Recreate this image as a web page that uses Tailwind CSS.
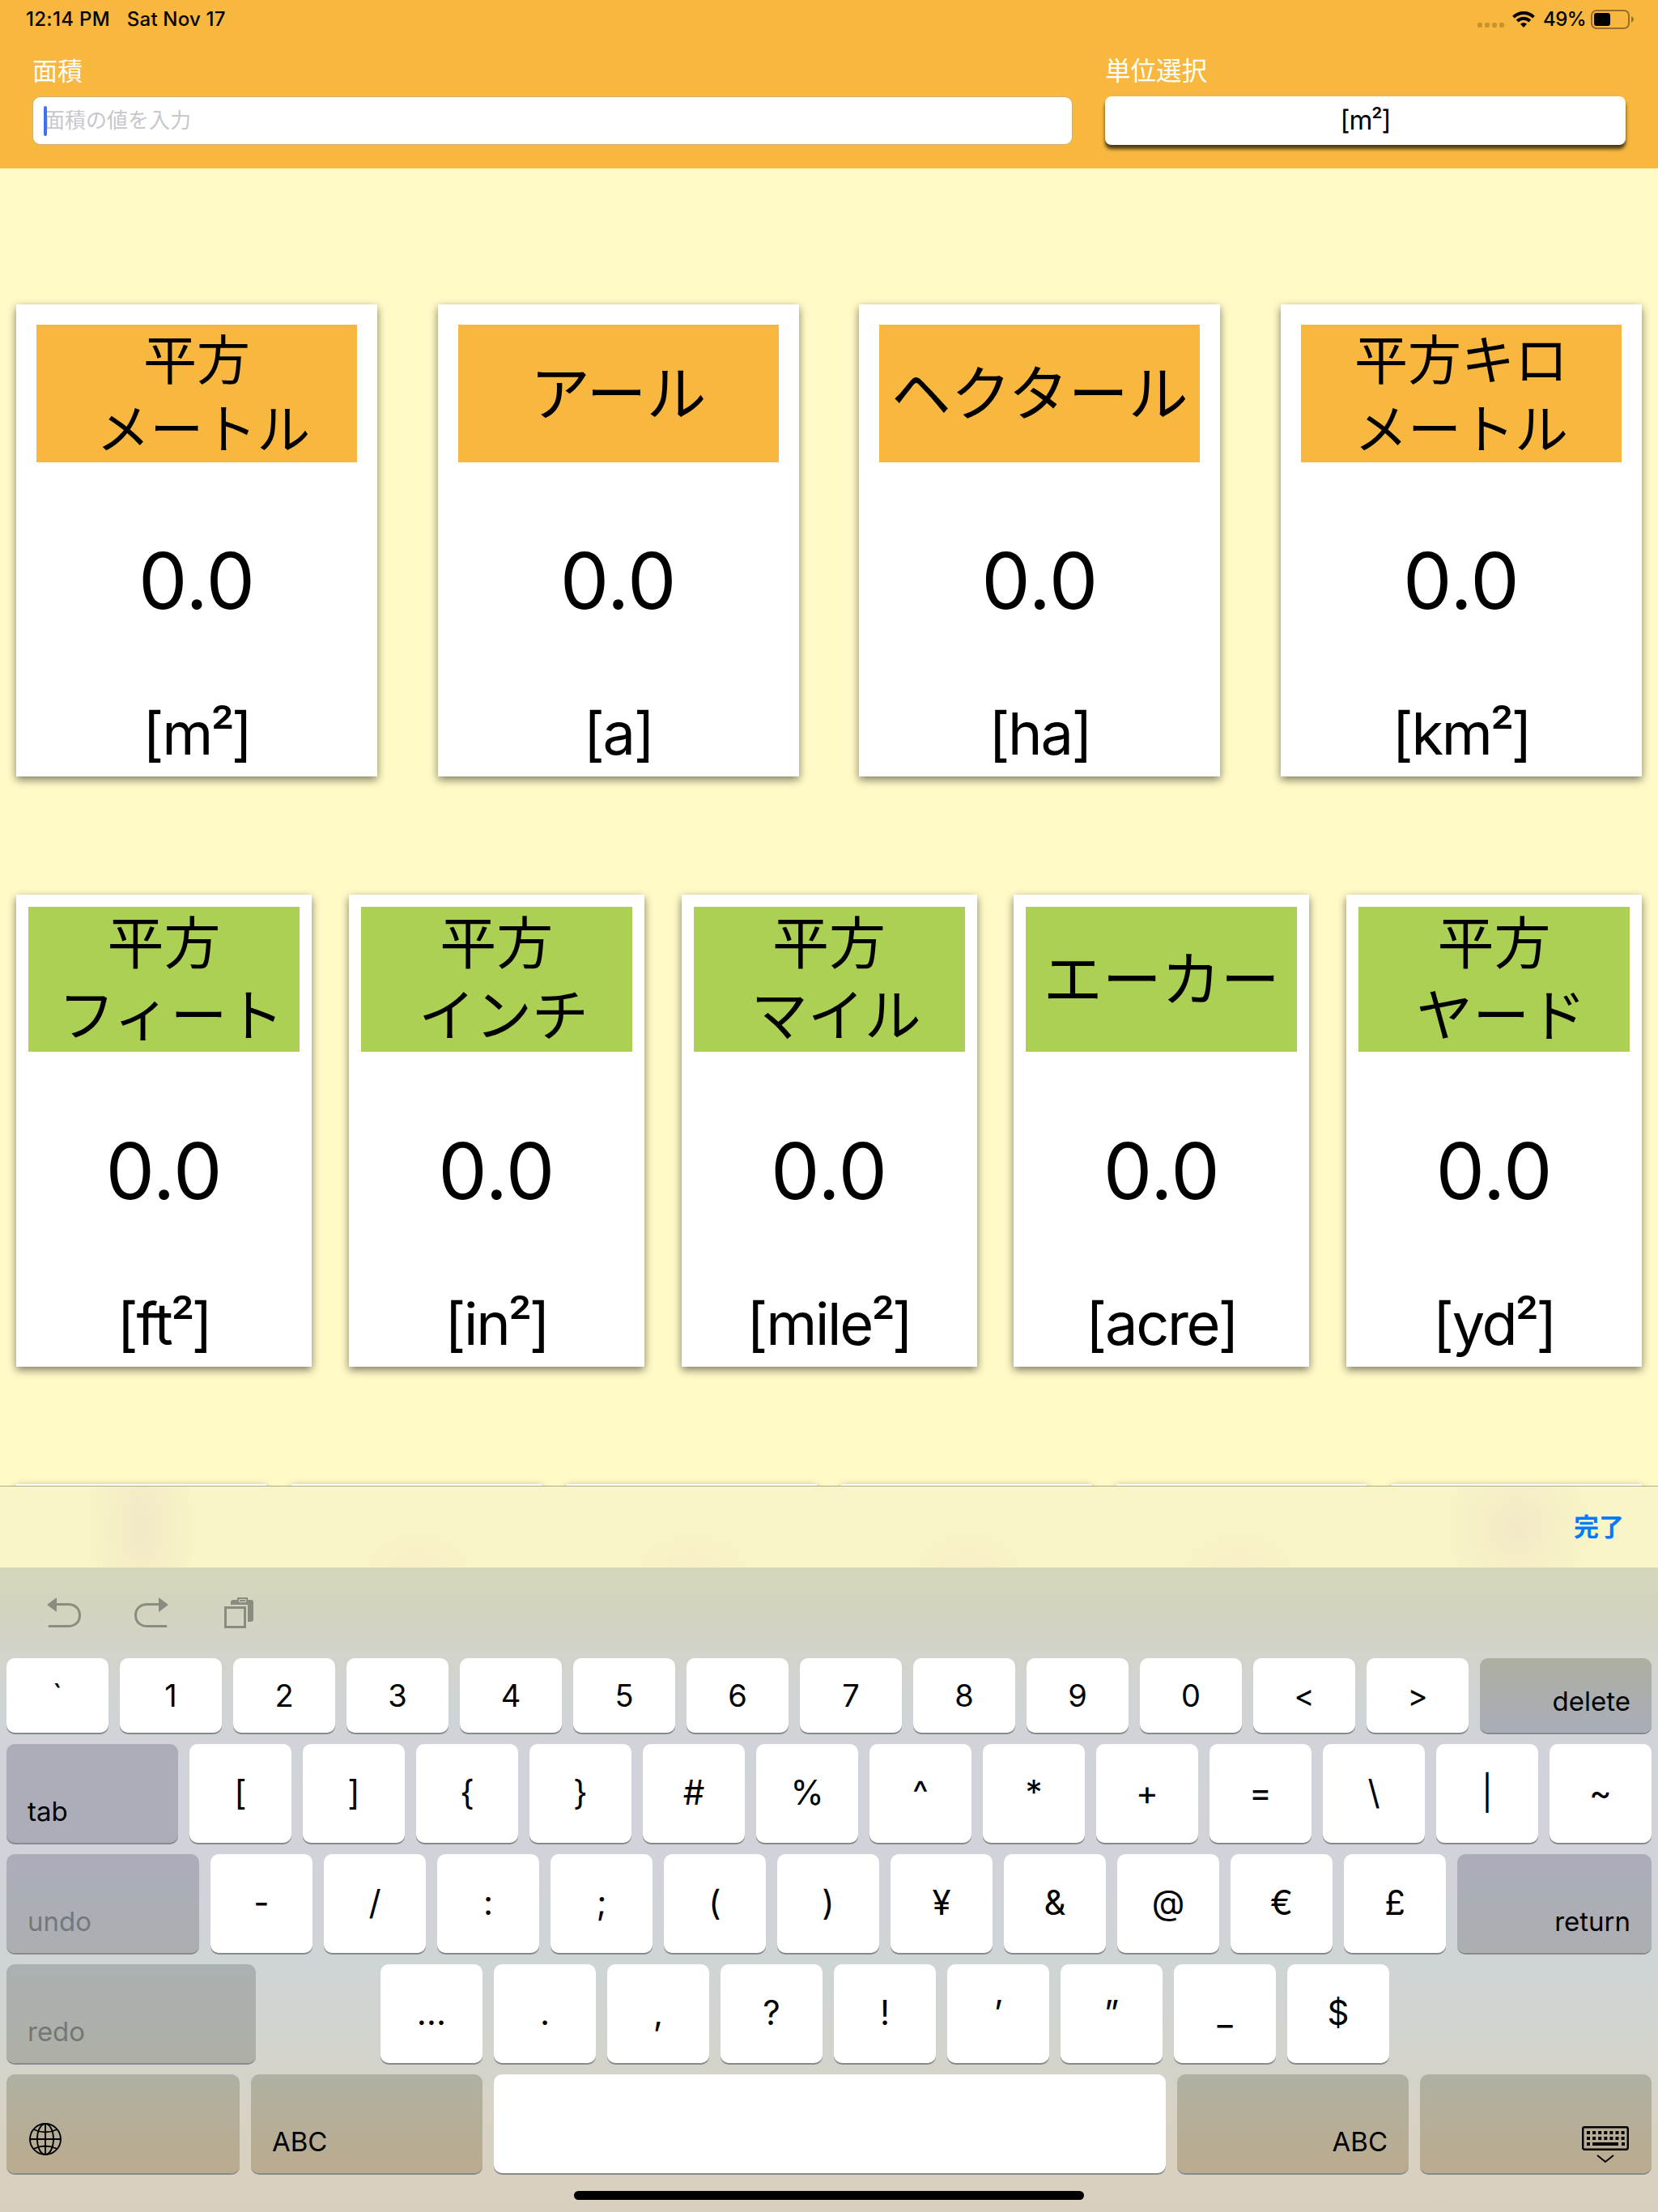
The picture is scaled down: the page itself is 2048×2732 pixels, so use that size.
<!DOCTYPE html>
<html lang="ja">
<head>
    <meta charset="UTF-8">
    <meta name="viewport" content="width=device-width, initial-scale=1.0">
    <title>面積</title>
    <script src="https://cdn.jsdelivr.net/npm/@tailwindcss/browser@4"></script>
    <style>
        body {
            font-family: Inter, 'Noto Sans CJK JP', sans-serif;
        }
        .toolbar {
            background:
                radial-gradient(ellipse 70px 140px at 175px 50%, rgba(236, 222, 200, 0.55), transparent),
                radial-gradient(ellipse 95px 100px at 1874px 50%, rgba(238, 222, 200, 0.55), transparent),
                radial-gradient(ellipse 80px 50px at 515px 100%, rgba(249, 235, 198, 0.6), transparent),
                radial-gradient(ellipse 80px 50px at 855px 100%, rgba(249, 235, 198, 0.6), transparent),
                radial-gradient(ellipse 80px 50px at 1197px 100%, rgba(249, 235, 198, 0.6), transparent),
                radial-gradient(ellipse 80px 50px at 1530px 100%, rgba(249, 235, 198, 0.6), transparent),
                #f8f5c6;
        }
        .keyboard {
            background: linear-gradient(#d5d6ba 0%, #d3d4c0 7%, #d2d3cb 14%, #cfd3d3 20%, #d1d3da 29%, #d1d2da 45%, #cfd4d6 61%, #d2d4ce 73%, #d7d2c5 84%, #d9d1c0 93%, #d9cfc0 100%);
        }
    </style>
</head>
<body class="w-[2048px] h-[2732px] overflow-hidden bg-[#fffac6] text-black">
    <!-- Header -->
    <header class="h-[208px] bg-[#f8b73e]">
        <div class="h-[47px] pl-8 pr-[30px] flex items-center justify-between text-[24px] font-medium">
            <div class="flex gap-[21px]">
                <span class="tracking-[0.3px]">12:14 PM</span>
                <span class="tracking-[0.2px]">Sat Nov 17</span>
            </div>
            <div class="flex items-center">
                <svg class="mr-[10px]" width="33" height="24" viewBox="0 0 33 24" fill="#c6932f">
                    <rect x="0" y="16" width="6" height="6" rx="2"/><rect x="9" y="16" width="6" height="6" rx="2"/>
                    <rect x="18" y="16" width="6" height="6" rx="2"/><rect x="27" y="16" width="6" height="6" rx="2"/>
                </svg>
                <svg class="mr-[10px]" width="28" height="22" viewBox="0 0 28 22" fill="none" stroke="#000" stroke-width="4">
                    <path d="M1.5 8.2a17.5 17.5 0 0 1 25 0"/>
                    <path d="M6.2 13a11 11 0 0 1 15.6 0"/>
                    <path d="M14 21l-4-4.3a5.6 5.6 0 0 1 8 0z" fill="#000" stroke="none"/>
                </svg>
                <span class="w-[52px] tracking-[-0.5px] whitespace-nowrap">49%</span>
                <svg class="ml-[7px]" width="53" height="26" viewBox="0 0 53 26">
                    <rect x="1" y="2" width="46" height="22" rx="6" fill="none" stroke="#93702f" stroke-width="2"/>
                    <rect x="4" y="5" width="20" height="16" rx="3"/>
                    <path d="M50 9q3 1.500 3 4t-3 4z" fill="#93702f"/>
                </svg>
            </div>
        </div>
        <div class="px-10 pt-[25px] flex justify-between">
            <div class="w-[1285px]">
                <div class="mb-[15px] text-[31px] leading-8 text-white">面積</div>
                <div class="h-[60px] rounded-[10px] border border-[#cbb074] bg-white flex items-center pl-[13px]">
                    <span class="w-1 h-[37px] rounded-full bg-[#436ff0] -mr-1 z-10"></span>
                    <span class="text-[26px] leading-[26px] text-[#c7c7cc]">面積の値を入力</span>
                </div>
            </div>
            <div class="w-[643px]">
                <div class="mb-[15px] text-[31.500px] leading-8 text-white">単位選択</div>
                <div class="h-[60px] rounded-[8px] bg-white text-center text-[33px] leading-[59px] tracking-[-1px] shadow-[0_5px_4px_rgba(0,0,0,0.7)]">[m<span class="font-[Roboto] text-[35px] leading-[0] align-[3px]">²</span>]</div>
            </div>
        </div>
    </header>

    <!-- Cards -->
    <main class="h-[1627px] px-5 pt-[168px] overflow-hidden">
        <div id="metricRow" class="flex justify-between mb-[146px]"></div>
        <div id="imperialRow" class="flex justify-between mb-[145px]"></div>
        <div id="otherRow" class="flex justify-between"></div>
    </main>

    <!-- Input accessory bar -->
    <div class="toolbar h-[101px] border-t border-[#aeab8c] flex items-center justify-end pr-[42px]">
        <span class="text-[31px] font-bold text-[#007aff]">完了</span>
    </div>

    <!-- Keyboard -->
    <div class="keyboard h-[796px] px-2">
        <div class="h-28 flex items-center pl-[50px]">
            <svg class="mr-[66px]" width="42" height="38" viewBox="0 0 42 38" fill="none" stroke="#8b8c80" stroke-width="3" stroke-linecap="round">
                <path d="M11 8.500H26C35 8.500 40.500 14 40.500 22S35 35.500 26 35.500H3"/>
                <path d="M0 9L12 0V18z" fill="#8b8c80" stroke="none"/>
            </svg>
            <svg class="mr-[69px]" width="42" height="38" viewBox="0 0 42 38" fill="none" stroke="#8b8c80" stroke-width="3" stroke-linecap="round">
                <path d="M31 8.500H16C7 8.500 1.500 14 1.500 22S7 35.500 16 35.500H39"/>
                <path d="M42 9L30 0V18z" fill="#8b8c80" stroke="none"/>
            </svg>
            <svg width="36" height="38" viewBox="0 0 36 38" fill="#8b8c80">
                <path d="M8 9V6q0-3 3-3h5V0h13v3h4q3 0 3 3v21q0 3-3 3h-4V9z"/>
                <path d="M18.500 2.500h8v3h-8z" fill="none" stroke="#d3d4c0" stroke-width="1"/>
                <path d="M1.500 12.500h24v24h-24z" fill="none" stroke="#8b8c80" stroke-width="3"/>
            </svg>
        </div>
        <div id="keys" class="flex flex-col gap-[14px]"></div>
        <div class="mx-auto mt-[22px] w-[630px] h-[11px] rounded-full bg-black"></div>
    </div>

    <script>
        // Two-line names start their second line with a quarter-em space
        const metric = [
            { name: ['平方', '\u2005メートル'], unit: '[m²]' },
            { name: ['アール'], unit: '[a]' },
            { name: ['ヘクタール'], unit: '[ha]' },
            { name: ['平方キロ', 'メートル'], unit: '[km²]' }
        ];
        const imperial = [
            { name: ['平方', '\u2005フィート'], unit: '[ft²]' },
            { name: ['平方', '\u2005インチ'], unit: '[in²]' },
            { name: ['平方', '\u2005マイル'], unit: '[mile²]' },
            { name: ['エーカー'], unit: '[acre]' },
            { name: ['平方', '\u2005ヤード'], unit: '[yd²]' }
        ];

        const shadow = 'shadow-[0_4px_10px_rgba(0,0,0,0.5)]';
        const squared = '<span class="font-[Roboto] text-[76px] leading-[0] align-[7px] tracking-[-3px]">²</span>';

        function card(item, cardClass, nameClass, oneLine, twoLines) {
            const lines = item.name.map(line => `<div>${line}</div>`).join('');
            return `
                <div class="${cardClass} ${shadow} h-[583px] bg-white flex flex-col">
                    <div class="${nameClass} ${item.name.length > 1 ? twoLines : oneLine} flex flex-col justify-center text-center whitespace-nowrap">${lines}</div>
                    <div class="flex-1 flex items-center justify-center text-[96px] leading-none pb-[3px]">0.0</div>
                    <div class="h-[93px] text-center text-[72px] leading-[80px] tracking-[-2.3px]">${item.unit.replace('²', squared)}</div>
                </div>`;
        }

        document.getElementById('metricRow').innerHTML = metric.map(item =>
            card(item, 'w-[446px]', 'mx-[25px] mt-[25px] h-[170px] bg-[#f8b73e]', 'text-[74px] leading-[85px]', 'text-[66px] leading-[85px] pt-[4px]')).join('');
        document.getElementById('imperialRow').innerHTML = imperial.map(item =>
            card(item, 'w-[365px]', 'mx-[15px] mt-[15px] h-[179px] bg-[#acd054]', 'text-[73px] leading-[89px]', 'text-[70px] leading-[89px]')).join('');
        document.getElementById('otherRow').innerHTML =
            `<div class="w-[309px] h-[583px] bg-white ${shadow}"></div>`.repeat(6);

        const whiteKey = 'w-[126px] bg-white flex items-center justify-center';
        const darkKey = 'flex items-end text-[33px] leading-[40px] pb-[19px] px-[26px]';
        const cool = 'bg-[#abaeb9]';
        const warm = 'bg-linear-to-b from-[#afb1a3] to-[#bbab8d]';

        const globe = `
            <svg class="mb-[3px] ml-[2px]" width="40" height="40" viewBox="0 0 40 40" fill="none" stroke="#000" stroke-width="1.900">
                <circle cx="20" cy="20" r="19"/><ellipse cx="20" cy="20" rx="10" ry="19"/>
                <path d="M20 1v38M1 20h38M5.500 8Q20 15 34.500 8M5.500 32Q20 25 34.500 32"/>
            </svg>`;
        const hide = `
            <svg class="-mb-[7px] mr-[2px]" width="58" height="46" viewBox="0 0 58 46" fill="none" stroke="#000" stroke-width="2.500">
                <rect x="1.200" y="1.200" width="55.600" height="27.600" rx="2"/>
                <path d="M6 8h47M6 15h47" stroke-width="4" stroke-dasharray="4 3.100"/>
                <path d="M6 22h4M13 22h32M49 22h4" stroke-width="4"/>
                <path d="M19 36l10 8 10-8" stroke-width="2"/>
            </svg>`;

        // A string is a run of white keys, an array is [label, classes]
        const rows = [
            ['`1234567890<>', ['delete', 'w-[212px] justify-end bg-linear-to-b from-[#adafa1] to-[#a9adb8]']],
            [['tab', 'w-[212px] ' + cool], '[]{}#%^*+=\\|~'],
            [['undo', 'w-[238px] text-[#75777c] bg-linear-to-b from-[#abaeba] to-[#abafb1]'], '-/:;()¥&@€£', ['return', 'w-[240px] justify-end bg-linear-to-b from-[#abaeba] to-[#abafb1]']],
            [['redo', 'w-[308px] mr-[140px] text-[#757774] bg-linear-to-b from-[#abb0b1] to-[#aeb0a6]'], '….,?!’”_$'],
            [[globe, 'w-[288px] ' + warm], ['ABC', 'w-[286px] ' + warm], ['', 'w-[830px] bg-white'], ['ABC', 'w-[286px] justify-end ' + warm], [hide, 'w-[286px] justify-end ' + warm]]
        ];
        const escapes = { '<': '&lt;', '>': '&gt;', '&': '&amp;' };

        document.getElementById('keys').innerHTML = rows.map((row, i) => {
            const size = i === 0 ? 'h-[92px]' : 'h-[122px]';
            const font = i === 0 ? 'text-[38px]' : 'text-[42px] pb-[3px]';
            const base = `${size} rounded-[10px] shadow-[0_2px_0_#898a8d]`;
            return '<div class="flex gap-[14px]">' + row.map(part =>
                typeof part === 'string'
                    ? [...part].map(c => `<div class="${base} ${whiteKey} ${font}">${escapes[c] || c}</div>`).join('')
                    : `<div class="${base} ${darkKey} ${part[1]}">${part[0]}</div>`
            ).join('') + '</div>';
        }).join('');
    </script>
</body>
</html>
